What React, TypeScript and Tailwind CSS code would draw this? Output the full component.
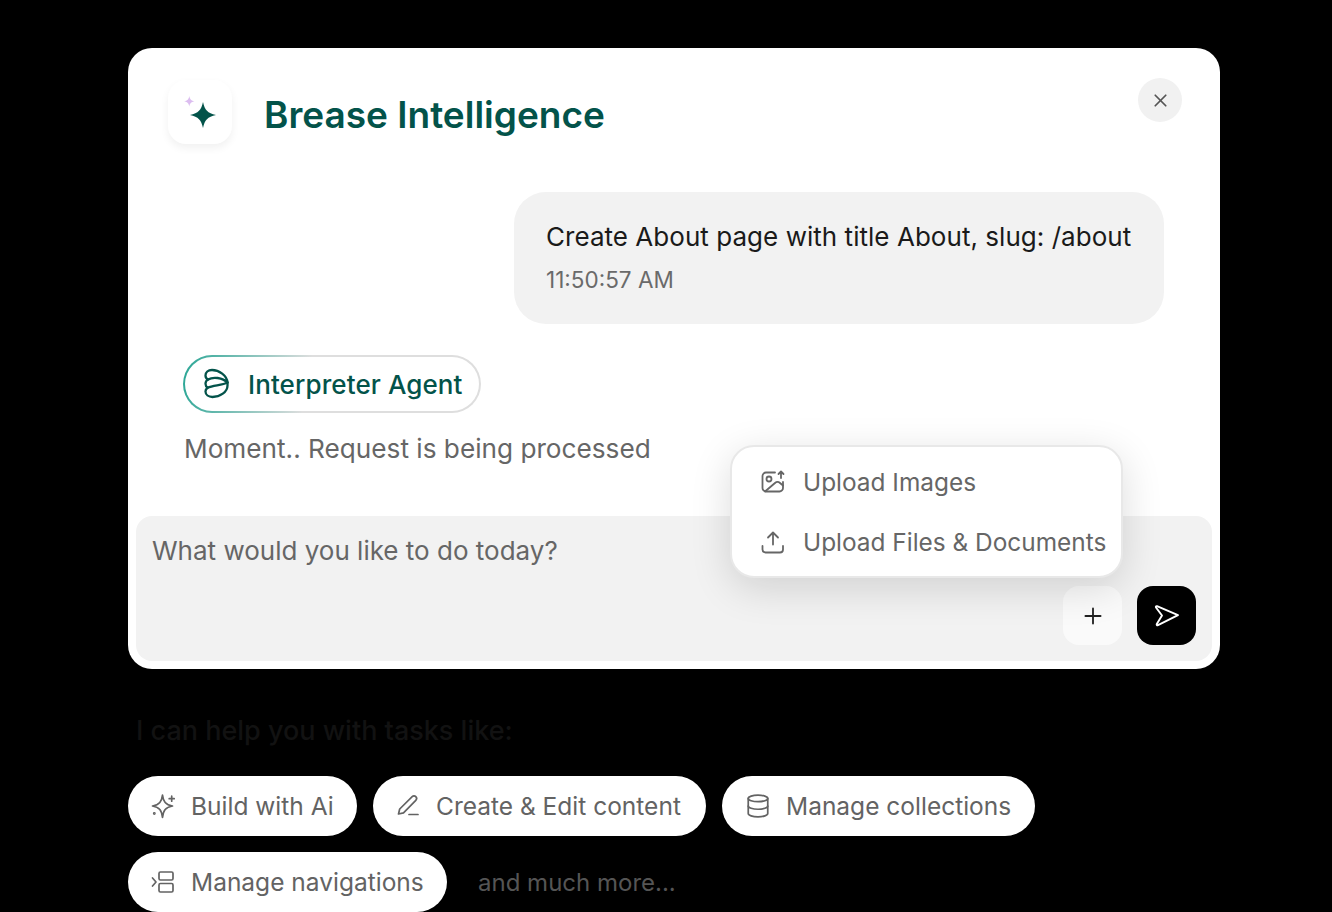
import { Database, Plus, X } from "lucide-react";
import type { ReactNode } from "react";

const Chip = ({ icon, label, className }: { icon: ReactNode; label: string; className: string }) => (
  <div className={"flex h-[60px] items-center rounded-full bg-white text-[24.5px] leading-none text-[#636363] " + className}>
    {icon}
    <span>{label}</span>
  </div>
);

const iconProps = {
  fill: "none",
  stroke: "currentColor",
  strokeLinecap: "round",
  strokeLinejoin: "round",
} as const;

const AiIcon = () => (
  <svg width="26" height="26" viewBox="0 0 26 26" strokeWidth="1.7" {...iconProps}>
    <path d="M12.500 2c.8 6.500 3 9.800 10 11-7 1.200-9.200 4.500-10 11.500-.8-7-3-10.300-10-11.500 7-1.200 9.200-4.500 10-11Z" />
    <path d="M21.700 3.200v5M19.200 5.700h5" />
    <circle cx="4.300" cy="20.500" r="0.6" />
  </svg>
);

const PenIcon = () => (
  <svg width="26" height="26" viewBox="0 0 26 26" strokeWidth="1.7" {...iconProps}>
    <path d="M2.500 21l1.200-5L16.200 3.700a2.500 2.500 0 0 1 3.600 3.600L7.500 19.800Z" />
    <path d="M13 21.500h9" />
  </svg>
);

const NavIcon = () => (
  <svg width="26" height="26" viewBox="0 0 26 26" strokeWidth="1.7" {...iconProps}>
    <path d="M2.500 9 6 13l-3.500 4" />
    <rect x="9" y="3" width="14" height="8" rx="1.4" />
    <rect x="9" y="14.500" width="14" height="8.500" rx="1.4" />
  </svg>
);

const ImageUploadIcon = () => (
  <svg className="shrink-0" width="24" height="24" viewBox="0 0 24 24" strokeWidth="1.8" {...iconProps}>
    <path d="M14 2.500H5A3.500 3.500 0 0 0 1.500 6v12A3.500 3.500 0 0 0 5 21.500h13.500A3.500 3.500 0 0 0 22 18v-6" />
    <circle cx="8" cy="9" r="2.500" />
    <path d="M4 21.500 14 13c1.500-1.300 3.500-1.300 5 0l3 2.500" />
    <path d="M20 8V1.500M17.500 4 20 1.500 22.500 4" />
  </svg>
);

const FileUploadIcon = () => (
  <svg className="shrink-0" width="24" height="24" viewBox="0 0 24 24" strokeWidth="1.8" {...iconProps}>
    <path d="M1.500 16v3.500A3 3 0 0 0 4.500 22.500h14.500a3 3 0 0 0 3-3V16" />
    <path d="M12 14.500V2.500M7 7.500l5-5 5 5" />
  </svg>
);

const SendIcon = () => (
  <svg width="28" height="28" viewBox="0 0 28 28" strokeWidth="1.9" {...iconProps}>
    <path d="M4 4.200 25 13.200 5 23.200c-1 .4-1.600-.4-1.200-1.200L9 13.500 3 5.500c-.5-.9.200-1.600 1-1.300Z" />
  </svg>
);

const BreaseMark = () => (
  <svg width="26" height="32" viewBox="0 0 26 32" strokeWidth="2.3" {...iconProps} stroke="#03534a">
    <path d="M8 2C4 2 1.500 4.500 1.500 7.500c0 1.800 1 3.300 2.500 4C9 8.500 18.500 9.500 23.500 14.500 23 7.500 15 2 8 2Z" />
    <path d="M4 11.500c-1.800 1-2.500 2.500-2.500 4.300 0 1.600.8 3 2.200 3.900C9 17 18 17.500 23.500 14.500" />
    <path d="M3.700 19.700c-1.500 1-2.200 2.300-2.200 3.800 0 3.200 3 5.500 7 5.500 7.500 0 15-5 15-11.500v-3" />
  </svg>
);

export default function App() {
  return (
    <div className="h-[912px] w-[1332px] overflow-hidden bg-black pl-[128px] pt-[48px] font-['Inter',sans-serif]">
      <div className="relative flex h-[621px] w-[1092px] flex-col rounded-[24px] bg-white">
        {/* header */}
        <div className="flex h-[96px] items-end pl-[40px]">
          <div className="flex h-[64px] w-[64px] items-center justify-center rounded-[18px] bg-white shadow-[0_4px_8px_rgba(0,0,0,0.06)]">
            <svg width="64" height="64" viewBox="0 0 64 64">
              <path d="M35 22C36.800 30 39.500 33.200 48 35 39.500 36.800 36.800 40 35 48 33.200 40 30.500 36.800 22 35 30.500 33.200 33.200 30 35 22Z" fill="#03534a" />
              <path d="M21.300 16C22 19.500 23.200 20.600 26.500 21.300 23.200 22 22 23.200 21.300 26.500 20.600 23.200 19.500 22 16.100 21.300 19.500 20.600 20.600 19.500 21.300 16Z" fill="#dcbdf0" />
            </svg>
          </div>
          <h1 className="ml-[32px] self-center pt-[36px] text-[37px] font-semibold leading-none text-[#03534a]">Brease Intelligence</h1>
        </div>
        <button className="absolute right-[38px] top-[30px] flex h-[44px] w-[44px] items-center justify-center rounded-full bg-[#f1f1f1] text-[#555]">
          <X size={21} strokeWidth={2} />
        </button>

        {/* user message */}
        <div className="mr-[56px] mt-[48px] flex h-[132px] w-[650px] flex-col self-end rounded-[32px] bg-[#f2f2f2] pl-[32px] pt-[28px]">
          <p className="text-[26px] leading-[34px] tracking-[0.04px] text-[#1a1a1a]">Create About page with title About, slug: /about</p>
          <p className="mt-[10px] text-[22.5px] leading-[32px] text-[#6a6a6a]">11:50:57 AM</p>
        </div>

        {/* agent */}
        <div className="ml-[55px] mt-[31px] w-[298px] rounded-full bg-[linear-gradient(100deg,#27a594_0%,#dedede_42%)] p-[2px]">
          <div className="flex h-[54px] items-center gap-[18px] rounded-full bg-white pl-[19px] text-[26px] font-medium tracking-[0.1px] text-[#03534a]">
            <BreaseMark />
            <span>Interpreter Agent</span>
          </div>
        </div>
        <p className="ml-[56px] mt-[19px] text-[26.2px] leading-[34px] text-[#666]">Moment.. Request is being processed</p>

        {/* composer */}
        <div className="mx-[8px] mt-[50px] flex h-[145px] flex-col rounded-[16px] bg-[#f2f2f2] px-[16px] pt-[17px]">
          <p className="text-[26px] leading-[36px] text-[#666]">What would you like to do today?</p>
          <div className="mt-[17px] flex justify-end gap-[15px]">
            <button className="flex h-[59px] w-[59px] items-center justify-center rounded-[16px] bg-[#fafafa] text-[#222]">
              <Plus size={26} strokeWidth={1.7} />
            </button>
            <button className="flex h-[59px] w-[59px] items-center justify-center rounded-[16px] bg-black text-white">
              <SendIcon />
            </button>
          </div>
        </div>

        {/* upload menu */}
        <div className="absolute left-[602px] top-[397px] flex h-[133px] w-[393px] flex-col justify-center gap-[23px] rounded-[24px] border-2 border-[#e8e8e8] bg-white pl-[29px] text-[24.4px] leading-[36px] text-[#666] shadow-[0_10px_40px_rgba(0,0,0,0.14)]">
          <div className="flex items-center gap-[18px] pt-[1px]">
            <ImageUploadIcon />
            <span>Upload Images</span>
          </div>
          <div className="flex items-center gap-[18px] pt-[1px]">
            <FileUploadIcon />
            <span className="whitespace-nowrap">Upload Files &amp; Documents</span>
          </div>
        </div>
      </div>

      <p className="ml-[8px] mt-[44px] text-[27px] font-medium leading-[36px] text-[#121212]">I can help you with tasks like:</p>

      <div className="mt-[27px] flex w-[940px] flex-wrap gap-[16px]">
        <Chip className="w-[229px] gap-[15px] pl-[22px]" icon={<AiIcon />} label="Build with Ai" />
        <Chip className="w-[333px] gap-[14px] pl-[23px]" icon={<PenIcon />} label="Create & Edit content" />
        <Chip className="w-[313px] gap-[15px] pl-[23px]" icon={<Database size={26} strokeWidth={1.6} />} label="Manage collections" />
        <Chip className="w-[319px] gap-[15px] pl-[22px]" icon={<NavIcon />} label="Manage navigations" />
        <p className="ml-[15px] self-center pt-[2px] text-[24px] leading-none text-[#555]">and much more...</p>
      </div>
    </div>
  );
}
